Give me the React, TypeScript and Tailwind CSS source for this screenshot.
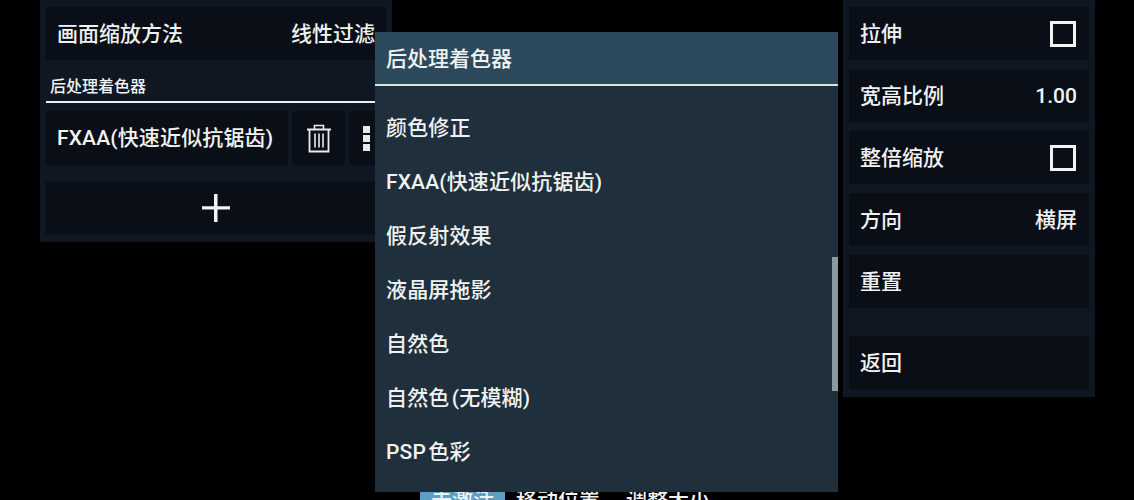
const FONT = "font-['Roboto','Noto_Sans_CJK_SC',sans-serif]";

const shaderOptions = [
  '颜色修正',
  'FXAA(快速近似抗锯齿)',
  '假反射效果',
  '液晶屏拖影',
  '自然色',
  '自然色 (无模糊)',
  'PSP 色彩',
];

function Row({ label, value, check }: { label: string; value?: string; check?: boolean }) {
  return (
    <div className="flex h-[53px] items-center justify-between bg-[#0a0f17] pl-[11px] pr-[12px] pt-[2px]">
      <span>{label}</span>
      {value && <span>{value}</span>}
      {check && <span className="-mt-[2px] mr-[1px] h-[26px] w-[26px] border-[3px] border-[#f1f3f3]" />}
    </div>
  );
}

function TrashIcon() {
  return (
    <svg width="26" height="30" viewBox="0 0 26 30" fill="none" stroke="#e8ebec" strokeWidth="1.6">
      <path d="M1 6.5h24" strokeWidth="2" />
      <path d="M8.5 6V2.500h9V6" />
      <path d="M3.500 7v21.500h19V7" strokeWidth="1.800" />
      <path d="M9 10.500v14M13 10.500v14M17 10.500v14" />
    </svg>
  );
}

export default function App() {
  return (
    <div className={`relative flex h-[500px] w-[1134px] flex-col overflow-hidden bg-black text-[21px] font-medium leading-none text-[#f1f3f3] ${FONT}`}>
      <div className="flex items-start justify-between pl-[40px] pr-[39px]">
        {/* left settings panel */}
        <div className="h-[242px] w-[352px] bg-[#0e1722] px-[6px] pt-[7px]">
          <div className="flex h-[53px] items-center justify-between bg-[#0a0f17] pl-[11px] pt-[2px]">
            <span>画面缩放方法</span>
            <span className="mr-[11px]">线性过滤</span>
          </div>
          <div className="mt-[19px] pl-[4px] text-[16px]">后处理着色器</div>
          <div className="mt-[6px] h-[2px] bg-[#eef1f2]" />
          <div className="mt-[8px] flex h-[54px] gap-[4px]">
            <div className="flex w-[242px] items-center whitespace-nowrap bg-[#0a0f17] pl-[11px] pt-[1px] tracking-[0.15px]">
              FXAA(快速近似抗锯齿)
            </div>
            <div className="flex w-[53px] items-center justify-center bg-[#0a0f17]">
              <TrashIcon />
            </div>
            <div className="flex flex-1 flex-col gap-[2px] bg-[#0a0f17] pl-[14px] pt-[15px]">
              <span className="h-[7px] w-[7px] bg-[#e8ebec]" />
              <span className="h-[7px] w-[7px] bg-[#e8ebec]" />
              <span className="h-[7px] w-[7px] bg-[#e8ebec]" />
            </div>
          </div>
          <div className="mt-[16px] flex h-[54px] items-center bg-[#0a0f17] pl-[155px]">
            <svg width="30" height="30" viewBox="0 0 30 30" fill="#f1f3f3">
              <path d="M13 1h3.500v12.200H29v3.400H16.500V29H13V16.600H1v-3.400h12z" />
            </svg>
          </div>
        </div>

        {/* right settings panel */}
        <div className="flex h-[397px] w-[252px] flex-col bg-[#0e1722] px-[6px] pt-[7px]">
          <div className="flex flex-col gap-[9px]">
            <Row label="拉伸" check />
            <Row label="宽高比例" value="1.00" />
            <Row label="整倍缩放" check />
            <Row label="方向" value="横屏" />
            <Row label="重置" />
          </div>
          <div className="mt-[28px]">
            <Row label="返回" />
          </div>
        </div>
      </div>

      {/* toolbar behind the dialog, cut off by the window */}
      <div className="mt-[91px] flex items-center pl-[420px] leading-[24px]">
        <span className="bg-[#5f9fc4] px-[11px]">未激活</span>
        <span className="ml-[11px]">移动位置</span>
        <span className="ml-[26px]">调整大小</span>
      </div>

      {/* shader picker dialog */}
      <div className="absolute left-[375px] top-[32px] h-[460px] w-[463px] bg-[#1f2f3b]">
        <div className="flex h-[52px] items-center bg-[#2c4a5c] pl-[11px] pt-[2px]">后处理着色器</div>
        <div className="h-[2px] bg-[#d5e3e4]" />
        <div className="pt-[15px]">
          {shaderOptions.map((option) => (
            <div key={option} className="flex h-[54px] items-center pl-[11px] tracking-[0.15px] [word-spacing:-3px]">
              {option}
            </div>
          ))}
        </div>
        <div className="absolute right-0 top-[225px] h-[134px] w-[6px] bg-[#8b9a9e]" />
      </div>
    </div>
  );
}
